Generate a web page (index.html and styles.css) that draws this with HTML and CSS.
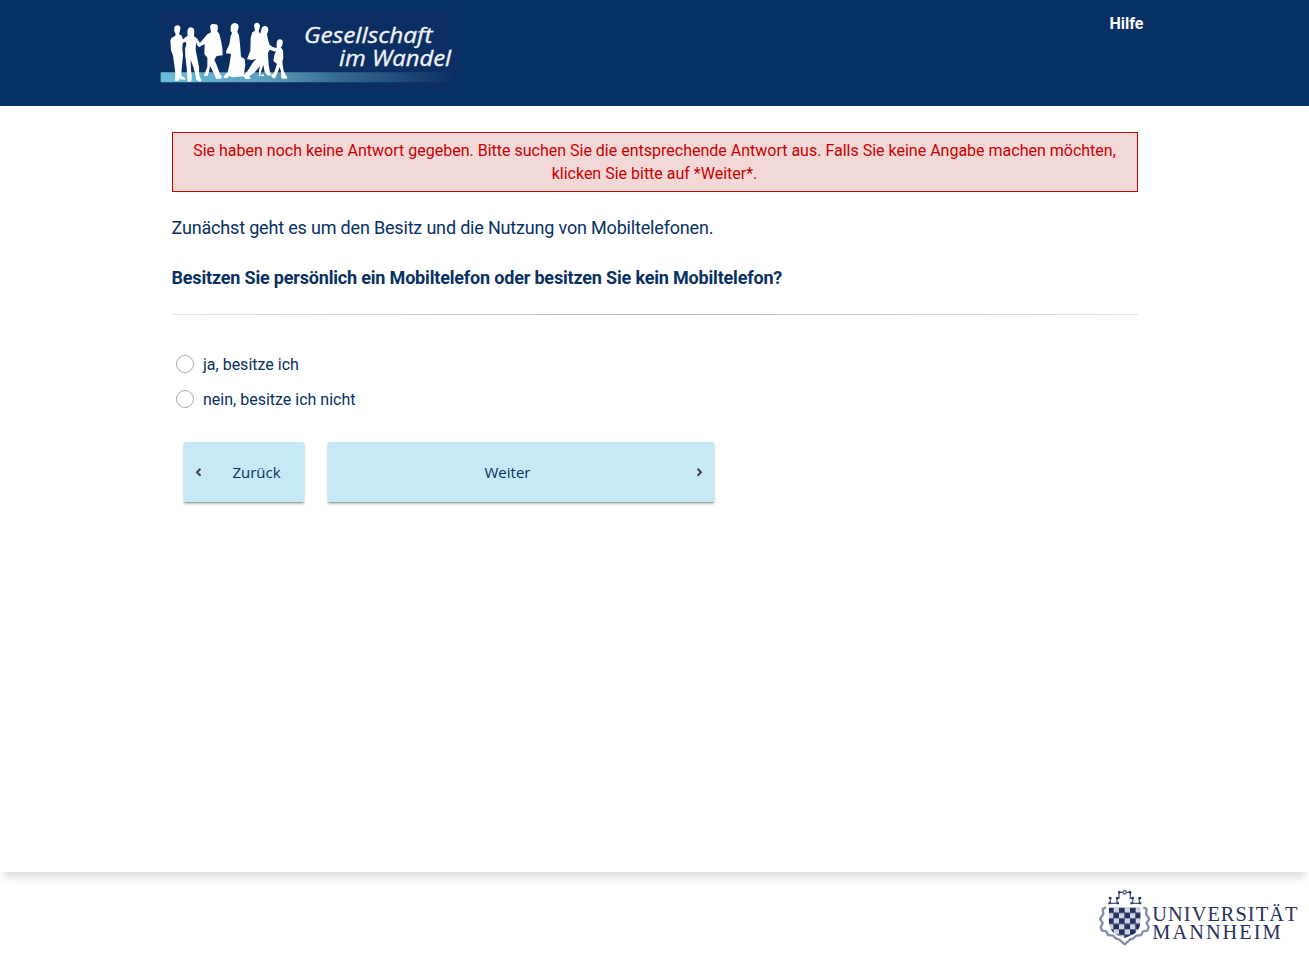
FILE: index.html
```html
<!DOCTYPE html>
<html lang="de">
<head>
<meta charset="utf-8">
<title>Gesellschaft im Wandel</title>
<link rel="stylesheet" href="styles.css">
</head>
<body>
<header class="header">
  <svg class="logo" viewBox="15 21 900 240" role="img" aria-label="Gesellschaft im Wandel">
    <defs><linearGradient id="band"><stop offset="0" stop-color="#68bfd9"/><stop offset=".35" stop-color="#5c9fbd"/><stop offset=".6" stop-color="#356b91"/><stop offset="1" stop-color="#0b2e62"/></linearGradient></defs>
    <path fill="#0b2e63" d="M15 21h900v240H15z"/>
    <path fill="url(#band)" d="M17 202h890v30H17z"/>
    <g fill="#fff">
      <path d="M58 67Q60 61 68 61Q77 62 76 71L74 80 72 87 80 92 84 104 82 130 84 150 82 172 80 192 79 212 90 219 90 224 76 223 73 220 72 227 60 227 61 205 58 180 54 152 48 136 46 107 49 99 61 92 62 86 58 80z"/>
      <path d="M97 80Q98 67 108 67Q118 69 118 79L117 94 127 101 136 116 139 120 135 127 128 123 123 112 122 136 127 160 132 186 133 212 139 226 135 231 124 225 122 212 115 186 107 164 108 195 110 214 109 230 98 230 97 218 95 188 91 154 90 132 94 118 92 110 82 115 79 108 91 97 98 92z"/>
      <path d="M165 63L171 57 184 58 189 63 187 79 193 87 198 107 202 129 203 151 185 153 178 164 185 180 194 205 201 215 198 221 184 222 176 204 165 183 162 201 158 213 147 213 150 203 157 185 157 158 148 147 149 118 137 122 132 117 148 98 157 88 168 82z"/>
      <path d="M227 66Q229 54 240 54Q251 55 251 67L247 80 252 91 255 118 258 155 269 162 271 180 268 199 266 214 232 217 222 213 217 220 206 219 206 213 218 202 223 180 228 147 213 145 214 137 223 118 227 93 231 84 227 78z"/>
      <path d="M297 62Q298 53 307 53Q315 55 315 65L311 79 315 87 319 74Q321 62 331 63Q341 65 340 78L336 88 340 107 344 120 358 130 364 134 361 140 344 134 339 145 341 180 345 201 350 211 338 212 329 201 325 180 318 201 315 212 325 207 327 213 312 213 312 196 315 183 298 203 283 213 287 222 272 222 264 213 277 199 285 187 295 170 304 162 290 165 276 163 286 137 287 99 292 82 300 77z"/>
      <path d="M365 113Q367 102 376 103Q385 105 383 115L381 124 377 127 384 136 385 158 382 171 386 198 397 218 394 222 379 220 378 200 374 186 367 205 359 221 350 217 349 212 358 201 366 177 355 168 358 151 363 137 347 130 349 125 365 129z"/>
    </g>
    <text class="logo-text" x="447" y="114" textLength="386" lengthAdjust="spacingAndGlyphs">Gesellschaft</text>
    <text class="logo-text" x="552" y="183" textLength="336" lengthAdjust="spacingAndGlyphs">im Wandel</text>
  </svg>
  <a class="help">Hilfe</a>
</header>
<main class="content">
  <div class="error">Sie haben noch keine Antwort gegeben. Bitte suchen Sie die entsprechende Antwort aus. Falls Sie keine Angabe machen möchten, klicken Sie bitte auf *Weiter*.</div>
  <p class="intro">Zunächst geht es um den Besitz und die Nutzung von Mobiltelefonen.</p>
  <p class="question">Besitzen Sie persönlich ein Mobiltelefon oder besitzen Sie kein Mobiltelefon?</p>
  <div class="rule"></div>
  <div class="answers">
    <label class="answer"><input class="radio" type="radio" name="phone">ja, besitze ich</label>
    <label class="answer"><input class="radio" type="radio" name="phone">nein, besitze ich nicht</label>
  </div>
  <div class="buttons">
    <button class="button back"><svg class="arrow" viewBox="0 0 7 10"><path d="M5.500 1.700L2 5.200l3.500 3.500"/></svg><span class="label">Zurück</span></button>
    <button class="button next"><span class="label">Weiter</span><svg class="arrow" viewBox="0 0 7 10"><path d="M1.500 1.700L5 5.200 1.500 8.700"/></svg></button>
  </div>
</main>
<footer class="footer">
  <svg class="uni" viewBox="24 24 606 180" role="img" aria-label="Universität Mannheim">
    <defs><clipPath id="shield"><path d="M56 82h96v42q-2 31-25 41l-23 9-23-9q-23-10-25-41z"/></clipPath>
    <pattern id="check" x="54" y="82" width="33" height="33" patternUnits="userSpaceOnUse"><path fill="#cfd3e0" d="M0 0h33v33H0z"/><path fill="#26315f" d="M0 0h17v17H0zM16 16H33V33H16z"/></pattern></defs>
    <path fill="url(#check)" clip-path="url(#shield)" d="M54 82h100v94H54z"/>
    <path fill="none" stroke="#858eaa" stroke-width="7" stroke-linejoin="round" d="M48 82l-10 5 2 15-10 15 8 12-6 13 4 10 13 2 5 11 15 2 10 9 8 2 17 15 17-15 8-2 10-9 15-2 5-11 13-2 4-10-6-13 8-12-10-15 2-15-10-5"/>
    <g fill="none" stroke="#4a557f" stroke-width="4">
      <path d="M61 53v17h20V53M57 70h28M58 55h7M77 55h10V37h12M109 37h12v18h10M128 53v17h20V53M124 70h28M144 55h8"/>
      <circle cx="104" cy="37" r="5"/>
    </g>
    <g fill="#26315f"><circle cx="60" cy="54" r="4"/><circle cx="82" cy="54" r="4"/><circle cx="88" cy="37" r="4"/><circle cx="120" cy="37" r="4"/><circle cx="128" cy="54" r="4"/><circle cx="150" cy="54" r="4"/><path d="M55 67h6v6h-6zM81 67h6v6h-6zM121 67h6v6h-6zM148 67h6v6h-6z"/></g>
    <text class="uni-text" x="187" y="123" textLength="435">UNIVERSITÄT</text>
    <text class="uni-text" x="187" y="177" textLength="385">MANNHEIM</text>
  </svg>
</footer>
</body>
</html>
```
FILE: styles.css
```css
* { box-sizing: border-box; }
body { margin: 0; min-height: 958px; display: flex; flex-direction: column; background: #fff; color: #083163; font-family: Roboto, sans-serif; font-size: 16px; }
.header { height: 106px; padding: 12px 165.5px 0 160px; background: #083163; display: flex; justify-content: space-between; align-items: flex-start; }
.logo { width: 300px; height: 80px; }
.logo-text { font-family: "Open Sans", sans-serif; font-style: italic; font-size: 64px; fill: #f0f2f5; stroke: #f0f2f5; stroke-width: 1; }
.help { color: #fff; font-weight: 700; line-height: 24px; }
.content { flex: 1; padding: 26px 171.5px 0 171.5px; box-shadow: 0 10px 7px -4px #e0e0e0; }
.error { height: 60px; padding: 6px 18px; border: 1px solid #c00; background: #f3d8d8; color: #c00; text-align: center; line-height: 23px; }
.intro, .question { margin: 0; font-size: 18px; letter-spacing: -.01em; line-height: 26px; white-space: nowrap; }
.intro { margin-top: 23px; }
.question { margin-top: 24px; font-weight: 700; }
.rule { height: 1px; margin-top: 23px; background: linear-gradient(90deg, #e5e5e5, #b5b5b5 50%, #e5e5e5); }
.answers { display: flex; flex-direction: column; gap: 11px; margin-top: 37px; padding-left: 4.5px; }
.answer { display: flex; align-items: center; gap: 9px; height: 24px; }
.radio { appearance: none; width: 18px; height: 18px; margin: 0; border: 1px solid #aaa; border-radius: 50%; background: #fff; }
.buttons { display: flex; gap: 24px; margin: 31px 0 0 12.5px; }
.button { height: 60px; padding: 0 11px; border: 0; background: #c5e9f5; color: #083163; font: 15px "Open Sans", sans-serif; display: flex; align-items: center; box-shadow: 0 2px 3px rgba(0,0,0,.25), 0 1px 1px rgba(0,0,0,.2); border-radius: 1px; }
.back { width: 120px; }
.next { width: 386px; }
.label { flex: 1; text-align: center; }
.back .label { padding-left: 18px; }
.next .label { padding-right: 20px; }
.arrow { width: 7px; height: 10px; fill: none; stroke: #444; stroke-width: 2; }
.footer { height: 86px; padding: 16px 9px 0 0; display: flex; justify-content: flex-end; }
.uni { width: 202px; height: 60px; }
.uni-text { font-family: "Liberation Serif", serif; font-size: 61px; fill: #26315f; }
```
